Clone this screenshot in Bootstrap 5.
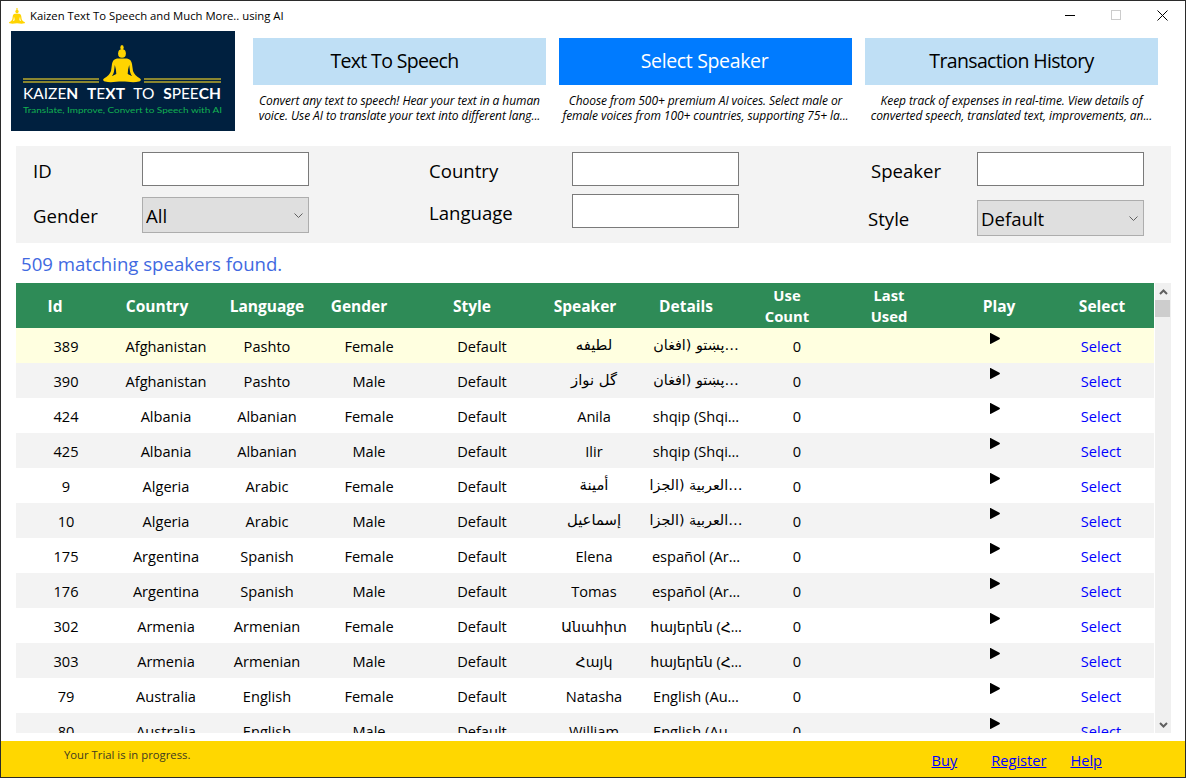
<!DOCTYPE html>
<html lang="en">
<head>
<meta charset="utf-8">
<title>Kaizen Text To Speech</title>
<link href="https://cdn.jsdelivr.net/npm/bootstrap@5.3.0/dist/css/bootstrap.min.css" rel="stylesheet">
<style>
html,body{margin:0;height:100%;overflow:hidden;background:#fff}
body{font-family:"Open Sans","Noto Sans","DejaVu Sans",sans-serif;color:#000}
.app-win{width:1186px;height:778px;border:1px solid #2b2b2b;background:#fff;display:flex;flex-direction:column}
.title-bar{height:30px;flex:none;padding-left:8px;font-size:11.3px;gap:5px}
.win-ctl{width:46px;height:30px;display:flex;align-items:center;justify-content:center;padding-bottom:2px}
.head-row{height:100px;flex:none;padding-left:10px;gap:18px}
.logo-box{width:224px;height:100px;flex:none;display:block}
.tabs-wrap{gap:13px;padding-top:7px}
.tab-col{width:293px}
.tab-btn,.tab-btn:hover{width:100%;height:47px;border-radius:0;border:0;background:#bfdff5;color:#000;font-size:19.5px;letter-spacing:-.65px;padding:0 0 2px}
.tab-btn.tab-first{padding-right:10px}
.tab-btn.tab-on,.tab-btn.tab-on:hover{background:#007bff;color:#fff;padding-right:2px;letter-spacing:-.35px}
.tab-desc{font-size:12px;font-style:italic;line-height:15px;text-align:center;margin-top:8px;letter-spacing:-.08px;white-space:nowrap}
.filter-panel{margin:15px 14px 0 15px;height:97px;background:#f3f3f3;flex:none;padding-top:6px}
.flt-grp{display:grid;align-content:start;align-items:center}
.grp-a{width:293px;margin-right:120px;grid-template-columns:126px 167px;row-gap:11px}
.grp-b{width:310px;margin-right:129px;grid-template-columns:143px 167px;row-gap:8px}
.grp-c{width:276px;grid-template-columns:109px 167px;row-gap:14px}
.flt-lab{font-size:18.6px;line-height:26px;padding-top:3px}
.lab-in{padding-left:17px}
.lab-sp{padding-left:3px}
.lab-low{padding-top:1px}
.flt-in.form-control{width:167px;height:34px;min-height:34px;border:1px solid #7a7a7a;border-radius:0;background:#fff;padding:0 4px}
.flt-sel.form-select{width:167px;height:36px;border:1px solid #adadad;border-radius:0;background-color:#dfdfdf;color:#000;font-size:18.6px;line-height:26px;padding:2px 0 0 3px;background-image:url("data:image/svg+xml,%3csvg xmlns='http://www.w3.org/2000/svg' viewBox='0 0 9 5'%3e%3cpath fill='none' stroke='%23606060' d='M.5.5l4 4 4-4'/%3e%3c/svg%3e");background-size:9px 5px;background-position:right 5px center}
.found-line{font-size:18.6px;color:#4169e1;line-height:26px;margin:8px 0 6px 20px;flex:none}
.grid-zone{height:450px;flex:none;margin-left:15px;margin-right:14px;gap:1px;overflow:hidden}
.grid-scroll{width:1138px;flex:none;overflow:hidden}
.spk-table{table-layout:fixed;width:1138px;margin:0;font-size:14.6px}
.spk-table th{background:#2e8b57;color:#fff;font-weight:700;font-size:15.5px;height:45px;padding:1px 0 0;text-align:center;line-height:21px;vertical-align:middle;border:0}
.spk-table th.hd-two{font-size:14.8px;padding-top:0}
.spk-table td{height:35px;padding:2px 0 0;text-align:center;vertical-align:middle;border:0;white-space:nowrap;overflow:hidden;background:transparent;color:#000}
.spk-table tbody tr{background:#fff}
.spk-table tbody tr:nth-child(even){background:#f3f3f3}
.spk-table tbody tr.row-hot{background:#ffffe0}
.spk-table th.hd-l{padding-right:20px}
.spk-table th.hd-id{padding-right:22px}
.spk-table th.hd-c{padding-right:18px}
.spk-table th.hd-last{padding-right:8px}
.spk-table th.hd-play{padding-left:10px}
.spk-table th.hd-sel{padding-left:2px}
.spk-table td.ar-cell{font-family:"DejaVu Sans",sans-serif;font-size:14.8px;padding-top:0}
.spk-table td.ar-det{font-size:14.3px}
.spk-table td.hy-cell{font-size:14.2px}
.spk-table a{color:#00f;text-decoration:none}
.spk-table td.play-cell{vertical-align:top;padding:5px 0 0 49px;text-align:left}
.play-ico{display:block}
.sb-col{width:16px;flex:none;background:#f0f0f0}
.sb-thumb{height:17px;background:#cdcdcd;flex:none;margin-right:1px}
.sb-btn{height:17px;flex:none;display:flex;align-items:center;justify-content:center}
.foot-bar{margin-top:8px;height:36px;flex:none;background:#ffd700;font-size:11.3px;color:#403a20}
.foot-msg{padding:5px 0 0 63px;line-height:18px}
.foot-links{font-size:14.6px;padding:9px 83px 0 0}
.foot-links a{color:#00f}
.foot-a{margin-right:34px}
.foot-b{margin-right:24px}
</style>
</head>
<body>
<svg width="0" height="0" class="d-none">
  <symbol id="lotus" viewBox="0 0 38 38">
    <ellipse cx="19" cy="2.500" rx="1.700" ry="2.500"/>
    <ellipse cx="19" cy="8.500" rx="3.900" ry="4.300"/>
    <path fill-rule="evenodd" d="M14 13.500H24C27 14 28.500 16 29 19L30 26C31 29 33 31 37 33.500C38.500 34.500 38 36 36 36.500C30 38 25 36.500 19 36.500C13 36.500 8 38 2 36.500C0 36-.5 34.500 1 33.500C5 31 7 29 8 26L9 19C9.500 16 11 14 14 13.500ZM11.800 20L11 26.500C10.500 28.500 9.800 30 8.800 31.200L13.300 29C13.300 26 12.800 23 11.800 20ZM26.200 20L27 26.500C27.500 28.500 28.200 30 29.200 31.200L24.700 29C24.700 26 25.200 23 26.200 20Z"/>
  </symbol>
  <symbol id="tri" viewBox="0 0 11 11"><path d="M1 .5C1 0 1.500-.1 2 .2L10.500 4.800C11.100 5.200 11.100 5.800 10.500 6.200L2 10.800C1.500 11.100 1 11 1 10.500Z"/></symbol>
</svg>
<div class="app-win">
  <div class="title-bar d-flex align-items-center">
    <svg width="16" height="16" fill="#ffd400"><use href="#lotus"/></svg>
    <span>Kaizen Text To Speech and Much More.. using AI</span>
    <div class="ms-auto d-flex">
      <div class="win-ctl"><svg width="10" height="10"><path d="M0 5.500H10" stroke="#000"/></svg></div>
      <div class="win-ctl"><svg width="10" height="10"><rect x=".5" y=".5" width="9" height="9" fill="none" stroke="#ccc"/></svg></div>
      <div class="win-ctl"><svg width="11" height="11"><path d="M.5.500l10 10M10.500.500l-10 10" stroke="#000"/></svg></div>
    </div>
  </div>
  <div class="head-row d-flex">
    <svg class="logo-box" viewBox="0 0 224 100" xmlns="http://www.w3.org/2000/svg">
      <rect width="224" height="100" fill="#00203f"/>
      <use href="#lotus" x="92" y="14" width="38" height="38" fill="#ffd400"/>
      <path d="M12 48H88M12 51H88M133 48H210M133 51H210" stroke="#b8a82e" stroke-width="1.300"/>
      <text x="12" y="68" font-family="Lato,sans-serif" font-size="16" word-spacing="5" fill="#fff" textLength="198" lengthAdjust="spacingAndGlyphs">KAIZE<tspan font-weight="700">N</tspan> <tspan font-weight="700">T</tspan>E<tspan font-weight="700">XT</tspan> TO <tspan font-weight="700">S</tspan>PEE<tspan font-weight="700">CH</tspan></text>
      <text x="12" y="82" font-family="Lato,sans-serif" font-size="8" fill="#12b050" textLength="199" lengthAdjust="spacingAndGlyphs">Translate, Improve, Convert to Speech with AI</text>
    </svg>
    <div class="tabs-wrap d-flex">
      <div class="tab-col">
        <button type="button" class="btn tab-btn tab-first">Text To Speech</button>
        <div class="tab-desc">Convert any text to speech! Hear your text in a human<br>voice. Use AI to translate your text into different lang...</div>
      </div>
      <div class="tab-col">
        <button type="button" class="btn tab-btn tab-on">Select Speaker</button>
        <div class="tab-desc">Choose from 500+ premium AI voices. Select male or<br>female voices from 100+ countries, supporting 75+ la...</div>
      </div>
      <div class="tab-col">
        <button type="button" class="btn tab-btn">Transaction History</button>
        <div class="tab-desc">Keep track of expenses in real-time. View details of<br>converted speech, translated text, improvements, an...</div>
      </div>
    </div>
  </div>
  <div class="filter-panel d-flex">
    <div class="flt-grp grp-a">
      <div class="flt-lab lab-in">ID</div><input class="form-control flt-in" type="text" aria-label="ID">
      <div class="flt-lab lab-in lab-low">Gender</div><select class="form-select flt-sel" aria-label="Gender"><option>All</option></select>
    </div>
    <div class="flt-grp grp-b">
      <div class="flt-lab">Country</div><input class="form-control flt-in" type="text" aria-label="Country">
      <div class="flt-lab">Language</div><input class="form-control flt-in" type="text" aria-label="Language">
    </div>
    <div class="flt-grp grp-c">
      <div class="flt-lab lab-sp">Speaker</div><input class="form-control flt-in" type="text" aria-label="Speaker">
      <div class="flt-lab lab-low">Style</div><select class="form-select flt-sel" aria-label="Style"><option>Default</option></select>
    </div>
  </div>
  <div class="found-line">509 matching speakers found.</div>
  <div class="grid-zone d-flex">
    <div class="grid-scroll">
      <table class="table spk-table">
        <colgroup><col style="width:100px"><col style="width:100px"><col style="width:102px"><col style="width:102px"><col style="width:124px"><col style="width:100px"><col style="width:104px"><col style="width:98px"><col style="width:94px"><col style="width:108px"><col style="width:106px"></colgroup>
        <thead><tr><th class="hd-id">Id</th><th class="hd-c">Country</th><th>Language</th><th class="hd-l">Gender</th><th class="hd-l">Style</th><th class="hd-c">Speaker</th><th class="hd-l">Details</th><th class="hd-l hd-two">Use<br>Count</th><th class="hd-last hd-two">Last<br>Used</th><th class="hd-play">Play</th><th class="hd-sel">Select</th></tr></thead>
        <tbody>
          <tr class="row-hot"><td>389</td><td>Afghanistan</td><td>Pashto</td><td>Female</td><td>Default</td><td class="ar-cell">لطيفه</td><td class="ar-cell ar-det">پښتو (افغان…</td><td>0</td><td></td><td class="play-cell"><svg class="play-ico" width="11" height="11"><use href="#tri"/></svg></td><td><a href="#">Select</a></td></tr>
          <tr><td>390</td><td>Afghanistan</td><td>Pashto</td><td>Male</td><td>Default</td><td class="ar-cell">گل نواز</td><td class="ar-cell ar-det">پښتو (افغان…</td><td>0</td><td></td><td class="play-cell"><svg class="play-ico" width="11" height="11"><use href="#tri"/></svg></td><td><a href="#">Select</a></td></tr>
          <tr><td>424</td><td>Albania</td><td>Albanian</td><td>Female</td><td>Default</td><td>Anila</td><td>shqip (Shqi…</td><td>0</td><td></td><td class="play-cell"><svg class="play-ico" width="11" height="11"><use href="#tri"/></svg></td><td><a href="#">Select</a></td></tr>
          <tr><td>425</td><td>Albania</td><td>Albanian</td><td>Male</td><td>Default</td><td>Ilir</td><td>shqip (Shqi…</td><td>0</td><td></td><td class="play-cell"><svg class="play-ico" width="11" height="11"><use href="#tri"/></svg></td><td><a href="#">Select</a></td></tr>
          <tr><td>9</td><td>Algeria</td><td>Arabic</td><td>Female</td><td>Default</td><td class="ar-cell">أمينة</td><td class="ar-cell ar-det">العربية (الجزا…</td><td>0</td><td></td><td class="play-cell"><svg class="play-ico" width="11" height="11"><use href="#tri"/></svg></td><td><a href="#">Select</a></td></tr>
          <tr><td>10</td><td>Algeria</td><td>Arabic</td><td>Male</td><td>Default</td><td class="ar-cell">إسماعيل</td><td class="ar-cell ar-det">العربية (الجزا…</td><td>0</td><td></td><td class="play-cell"><svg class="play-ico" width="11" height="11"><use href="#tri"/></svg></td><td><a href="#">Select</a></td></tr>
          <tr><td>175</td><td>Argentina</td><td>Spanish</td><td>Female</td><td>Default</td><td>Elena</td><td>español (Ar…</td><td>0</td><td></td><td class="play-cell"><svg class="play-ico" width="11" height="11"><use href="#tri"/></svg></td><td><a href="#">Select</a></td></tr>
          <tr><td>176</td><td>Argentina</td><td>Spanish</td><td>Male</td><td>Default</td><td>Tomas</td><td>español (Ar…</td><td>0</td><td></td><td class="play-cell"><svg class="play-ico" width="11" height="11"><use href="#tri"/></svg></td><td><a href="#">Select</a></td></tr>
          <tr><td>302</td><td>Armenia</td><td>Armenian</td><td>Female</td><td>Default</td><td class="hy-cell">Անահիտ</td><td class="hy-cell">հայերեն (Հ…</td><td>0</td><td></td><td class="play-cell"><svg class="play-ico" width="11" height="11"><use href="#tri"/></svg></td><td><a href="#">Select</a></td></tr>
          <tr><td>303</td><td>Armenia</td><td>Armenian</td><td>Male</td><td>Default</td><td class="hy-cell">Հայկ</td><td class="hy-cell">հայերեն (Հ…</td><td>0</td><td></td><td class="play-cell"><svg class="play-ico" width="11" height="11"><use href="#tri"/></svg></td><td><a href="#">Select</a></td></tr>
          <tr><td>79</td><td>Australia</td><td>English</td><td>Female</td><td>Default</td><td>Natasha</td><td>English (Au…</td><td>0</td><td></td><td class="play-cell"><svg class="play-ico" width="11" height="11"><use href="#tri"/></svg></td><td><a href="#">Select</a></td></tr>
          <tr><td>80</td><td>Australia</td><td>English</td><td>Male</td><td>Default</td><td>William</td><td>English (Au…</td><td>0</td><td></td><td class="play-cell"><svg class="play-ico" width="11" height="11"><use href="#tri"/></svg></td><td><a href="#">Select</a></td></tr>
        </tbody>
      </table>
    </div>
    <div class="sb-col d-flex flex-column">
      <div class="sb-btn"><svg width="9" height="6"><path d="M1 5L4.500 1.500 8 5" fill="none" stroke="#606060" stroke-width="2"/></svg></div>
      <div class="sb-thumb"></div>
      <div class="sb-btn mt-auto"><svg width="9" height="6"><path d="M1 1L4.500 4.500 8 1" fill="none" stroke="#606060" stroke-width="2"/></svg></div>
    </div>
  </div>
  <div class="foot-bar d-flex justify-content-between">
    <div class="foot-msg">Your Trial is in progress.</div>
    <div class="foot-links d-flex"><a class="foot-a" href="#">Buy</a><a class="foot-b" href="#">Register</a><a href="#">Help</a></div>
  </div>
</div>
</body>
</html>
